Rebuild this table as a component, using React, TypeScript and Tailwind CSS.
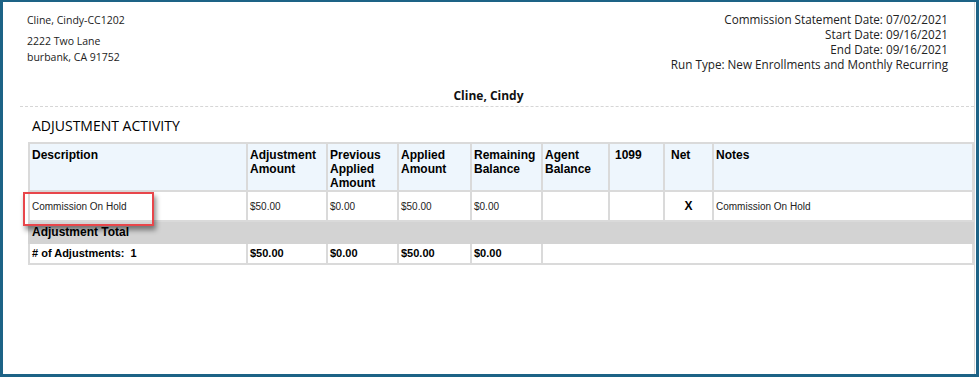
import React from "react";

const cols = [218, 80, 71, 73, 71, 67, 55, 49, 260];

export default function App() {
  const th = "border-2 border-[#dadada] align-top text-left font-bold text-[12px] leading-[14px] px-[2px] pt-[4px] text-black";
  const tdBase = "border-2 border-[#dadada] align-middle text-[10px] px-[2px] text-[#222]";
  const td = tdBase + " text-left";
  const tf = "border-2 border-[#dadada] align-middle text-left text-[11px] font-bold px-[2px] text-black";
  return (
    <div className="w-[979px] h-[377px] bg-white border-l-[3px] border-t-2 border-r-[3px] border-b-[3px] border-[#1d6386] relative overflow-hidden">
      <div className="h-full border-r border-[#d8d8d8] mr-[1px]">
        <div className="flex justify-between text-[#222]" style={{ fontFamily: '"Open Sans", "Noto Sans", sans-serif' }}>
          <div className="pl-[24px] pt-[10px] text-[10.5px]">
            <div className="leading-[16px]">Cline, Cindy-CC1202</div>
            <div className="leading-[16px] mt-[5px]">2222 Two Lane</div>
            <div className="leading-[16px]">burbank, CA 91752</div>
          </div>
          <div className="pr-[26px] pt-[10px] text-[11.7px] text-right">
            <div className="leading-[15px]">Commission Statement Date: 07/02/2021</div>
            <div className="leading-[15px]">Start Date: 09/16/2021</div>
            <div className="leading-[15px]">End Date: 09/16/2021</div>
            <div className="leading-[15px]">Run Type: New Enrollments and Monthly Recurring</div>
          </div>
        </div>
        <div
          className="text-center font-bold text-[12px] leading-[16px] mt-[16px] text-[#111]"
          style={{ fontFamily: '"Open Sans", "Noto Sans", sans-serif' }}
        >
          Cline, Cindy
        </div>
        <div className="ml-[17px] mt-[2px] border-b border-dashed border-[#d6d6d6]" />
        <div
          className="ml-[29px] mt-[10px] text-[14px] leading-[18px] text-black"
          style={{ fontFamily: '"Open Sans", "Noto Sans", sans-serif' }}
        >
          ADJUSTMENT ACTIVITY
        </div>
        <table
          className="ml-[25px] mt-[7px] border-collapse table-fixed w-[946px]"
          style={{ fontFamily: '"Liberation Sans", Arial, sans-serif' }}
        >
          <colgroup>
            {cols.map((w, i) => (
              <col key={i} style={{ width: w }} />
            ))}
          </colgroup>
          <tbody>
            <tr className="h-[48px] bg-[#eef6fd]">
              <td className={th}>Description</td>
              <td className={th}>Adjustment Amount</td>
              <td className={th}>Previous Applied Amount</td>
              <td className={th}>Applied Amount</td>
              <td className={th}>Remaining Balance</td>
              <td className={th}>Agent Balance</td>
              <td className={th + " pl-[5px]"}>1099</td>
              <td className={th + " pl-[6px]"}>Net</td>
              <td className={th}>Notes</td>
            </tr>
            <tr className="h-[30px]">
              <td className={td}>Commission On Hold</td>
              <td className={td}>$50.00</td>
              <td className={td}>$0.00</td>
              <td className={td}>$50.00</td>
              <td className={td}>$0.00</td>
              <td className={td}></td>
              <td className={td}></td>
              <td className={tdBase + " text-center"}>
                <span className="font-bold text-[12px] text-black">X</span>
              </td>
              <td className={td}>Commission On Hold</td>
            </tr>
            <tr className="h-[22px] bg-[#d3d3d3]">
              <td colSpan={9} className="border-2 border-[#d3d3d3] font-bold text-[12px] leading-[14px] px-[2px] text-black align-middle">
                Adjustment Total
              </td>
            </tr>
            <tr className="h-[21px]">
              <td className={tf + " whitespace-pre"}>{"# of Adjustments:  1"}</td>
              <td className={tf}>$50.00</td>
              <td className={tf}>$0.00</td>
              <td className={tf}>$50.00</td>
              <td className={tf}>$0.00</td>
              <td colSpan={4} className={tf}></td>
            </tr>
          </tbody>
        </table>
      </div>
      <div className="absolute left-[20px] top-[190px] w-[131px] h-[34px] border-2 border-[#e8464b] shadow-[2px_4px_5px_rgba(0,0,0,0.45)]" />
    </div>
  );
}
